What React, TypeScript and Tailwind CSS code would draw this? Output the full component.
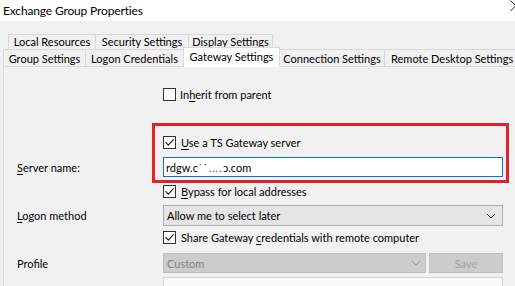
import React from "react";

const Check = ({ checked }: { checked?: boolean }) => (
  <span className="flex h-[13px] w-[13px] shrink-0 items-center justify-center border border-[#333333] bg-white">
    {checked && (
      <svg width="11" height="11" viewBox="0 0 11 11">
        <path d="M1.5 5.2 L4.3 8.2 L9.6 2.4" fill="none" stroke="#1a1a1a" strokeWidth="1.1" />
      </svg>
    )}
  </span>
);

const Chevron = ({ color = "#333333" }: { color?: string }) => (
  <svg width="10" height="6" viewBox="0 0 10 6">
    <path d="M1 1 L5 5 L9 1" fill="none" stroke={color} strokeWidth="1" />
  </svg>
);

export default function App() {
  return (
    <div className="relative h-[286px] w-[515px] overflow-hidden whitespace-nowrap bg-[#f0f0f0] font-['Lato',sans-serif] text-[11px] leading-none text-black">
      {/* title bar */}
      <div className="flex h-[21px] items-center bg-white pl-[3px] text-[12px] tracking-[-0.15px]">Exchange Group Properties</div>
      <svg className="absolute left-[510px] top-0" width="12" height="12" viewBox="0 0 12 12">
        <path d="M0.5 0.5 L11 11 M11 0.5 L0.5 11" stroke="#222" strokeWidth="1" />
      </svg>

      {/* tab rows */}
      <div className="mt-[13px] flex h-[16px] pl-[8px]">
        <div className="flex w-[88px] items-center justify-center border border-[#d9d9d9] bg-[#f0f0f0] pb-[2px]">Local Resources</div>
        <div className="-ml-px flex w-[94px] items-center justify-center border border-[#d9d9d9] bg-[#f0f0f0] pb-[2px]">Security Settings</div>
        <div className="-ml-px flex w-[85px] items-center justify-center border border-[#d9d9d9] bg-[#f0f0f0] pb-[2px]">Display Settings</div>
      </div>
      <div className="relative z-10 -mt-px flex h-[17px] items-end pl-[3px]">
        <div className="flex h-[17px] w-[83px] shrink-0 items-center justify-center border border-b-0 border-[#d9d9d9] bg-[#f0f0f0]">Group Settings</div>
        <div className="-ml-px flex h-[17px] w-[99px] shrink-0 items-center justify-center border border-b-0 border-[#d9d9d9] bg-[#f0f0f0]">Logon Credentials</div>
        <div className="-mb-px -ml-px flex h-[20px] w-[97px] shrink-0 items-center justify-center border border-b-0 border-[#d9d9d9] bg-white pb-[2px]">Gateway Settings</div>
        <div className="-ml-px flex h-[17px] w-[106px] shrink-0 items-center justify-center border border-b-0 border-[#d9d9d9] bg-[#f0f0f0]">Connection Settings</div>
        <div className="-ml-px flex h-[17px] w-[140px] shrink-0 items-center border border-b-0 border-[#d9d9d9] bg-[#f0f0f0] pl-[6px]">Remote Desktop Settings</div>
      </div>

      {/* tab page */}
      <div className="ml-[3px] h-[220px] border-l border-t border-[#d9d9d9] bg-[#f1f1f1] pl-[13px] pt-[20px]">
        <div className="flex h-[15px] items-center">
          <div className="w-[146px]" />
          <Check />
          <span className="ml-[4px]">In<u className="underline-offset-2">h</u>erit from parent</span>
        </div>

        <div className="mt-[33px] flex h-[15px] items-center">
          <div className="w-[146px]" />
          <Check checked />
          <span className="ml-[5px]"><u className="underline-offset-2">U</u>se a TS Gateway server</span>
        </div>

        <div className="mt-[7px] flex h-[20px] items-center">
          <div className="w-[146px]"><u className="underline-offset-2">S</u>erver name:</div>
          <div className="flex h-[20px] w-[340px] items-center border border-[#0078d7] bg-white pl-[2px]">
            rdgw.c<span className="tracking-[1px] text-[#555]">˙˙.‥.</span>ɔ.com
          </div>
        </div>

        <div className="mt-[7px] flex h-[15px] items-center">
          <div className="w-[146px]" />
          <Check checked />
          <span className="ml-[5px]"><u className="underline-offset-2">B</u>ypass for local addresses</span>
        </div>

        <div className="mt-[6px] flex h-[21px] items-center">
          <div className="w-[146px]"><u className="underline-offset-2">L</u>ogon method</div>
          <div className="flex h-[21px] w-[340px] items-center justify-between border border-[#adadad] bg-[#e5e5e5] pl-[3px] pr-[6px]">
            <span>Allow me to select later</span>
            <Chevron />
          </div>
        </div>

        <div className="mt-[4px] flex h-[15px] items-center">
          <div className="w-[146px]" />
          <Check checked />
          <span className="ml-[5px]">Share Gateway <u className="underline-offset-2">c</u>redentials with remote computer</span>
        </div>

        <div className="mt-[8px] flex h-[20px] items-center">
          <div className="w-[146px]">Profile</div>
          <div className="flex h-[20px] w-[263px] items-center justify-between border border-[#bfbfbf] bg-[#cccccc] pl-[3px] pr-[4px] text-[#838383]">
            <span>Custom</span>
            <Chevron color="#9a9a9a" />
          </div>
          <div className="ml-[3px] flex h-[20px] w-[74px] items-center justify-center border border-[#bfbfbf] bg-[#cccccc] text-[#a3a3a3]">Save</div>
        </div>

        <div className="mt-[4px] flex">
          <div className="w-[146px]" />
          <div className="h-[20px] w-[340px] border border-[#d4d4d4] bg-[#fafafa]" />
        </div>
      </div>

      {/* red highlight annotation */}
      <div className="absolute left-[152px] top-[123px] h-[60px] w-[357px] border-[3px] border-[#e0222b]" />
    </div>
  );
}
